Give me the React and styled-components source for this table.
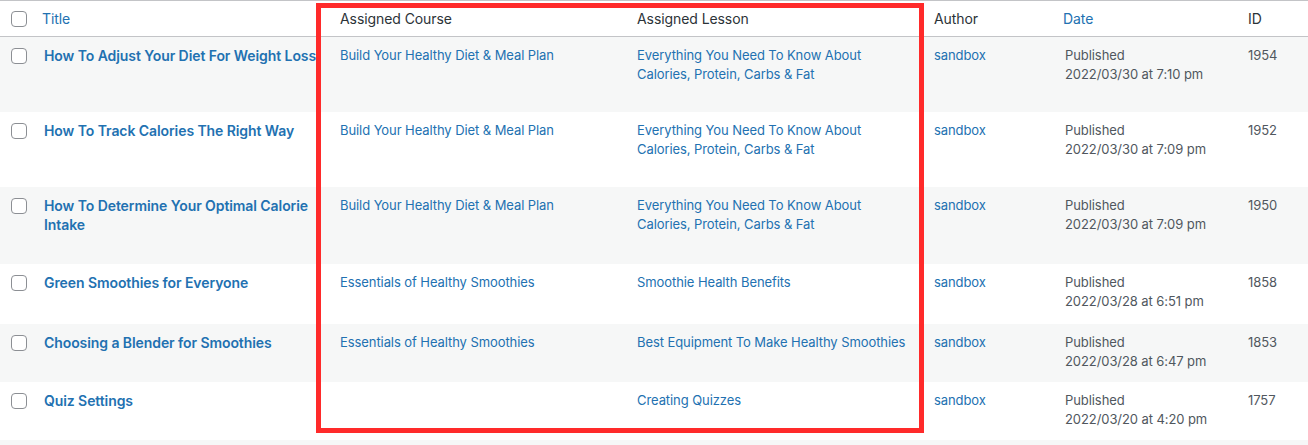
import React from 'react';
import styled, { createGlobalStyle } from 'styled-components';

const GlobalStyle = createGlobalStyle`
  html, body {
    margin: 0;
    padding: 0;
    background: #f6f7f7;
  }
  body {
    font-family: Inter, "Noto Sans", sans-serif;
    font-size: 13px;
    letter-spacing: -0.08px;
    color: #3c434a;
    -webkit-font-smoothing: antialiased;
  }
`;

const COLS = '34px 296px 297px 297px 131px 183px 1fr';

const Page = styled.div`
  position: relative;
`;

const Table = styled.div`
  background: #fff;
  border-top: 1px solid #c3c4c7;
`;

const HeadRow = styled.div`
  display: grid;
  grid-template-columns: ${COLS};
  height: 36px;
  box-sizing: border-box;
  border-bottom: 1px solid #c3c4c7;
  background: #fff;
`;

const HeadCell = styled.div`
  padding: 9px ${(p) => (p.$sortable ? '8px' : '10px')} 8px;
  font-size: 14px;
  line-height: 18px;
  color: ${(p) => (p.$sortable ? '#2271b1' : '#2c3338')};
`;

const CheckCell = styled.div`
  padding: ${(p) => (p.$head ? '10px' : '11px')} 0 0 11px;
`;

const Checkbox = styled.input.attrs({ type: 'checkbox' })`
  appearance: none;
  -webkit-appearance: none;
  display: block;
  width: 16px;
  height: 16px;
  margin: 0;
  box-sizing: border-box;
  border: 1px solid #8c8f94;
  border-radius: 4px;
  background: #fff;
`;

const Row = styled.div`
  display: grid;
  grid-template-columns: ${COLS};
  align-items: start;
  min-height: ${(p) => p.$h}px;
  background: ${(p) => (p.$striped ? '#f6f7f7' : '#fff')};
`;

const Cell = styled.div`
  padding: 9px 10px 8px;
  line-height: 19px;
  font-size: 13px;
  color: #50575e;
`;

const RowTitle = styled.a`
  display: block;
  font-size: 14px;
  font-weight: 600;
  line-height: 19px;
  color: #2271b1;
  text-decoration: none;
  white-space: nowrap;
`;

const Link = styled.a`
  color: #2271b1;
  text-decoration: none;
`;

const Highlight = styled.div`
  position: absolute;
  left: 316px;
  top: 3px;
  width: 608px;
  height: 430px;
  box-sizing: border-box;
  border: 5px solid #ff2a2a;
  pointer-events: none;
`;

const COURSE_DIET = 'Build Your Healthy Diet & Meal Plan';
const COURSE_SMOOTHIE = 'Essentials of Healthy Smoothies';
const LESSON_MACROS = ['Everything You Need To Know About', 'Calories, Protein, Carbs & Fat'];

const rows = [
  { title: ['How To Adjust Your Diet For Weight Loss'], course: COURSE_DIET, lesson: LESSON_MACROS, date: '2022/03/30 at 7:10 pm', id: 1954, h: 75 },
  { title: ['How To Track Calories The Right Way'], course: COURSE_DIET, lesson: LESSON_MACROS, date: '2022/03/30 at 7:09 pm', id: 1952, h: 75 },
  { title: ['How To Determine Your Optimal Calorie', 'Intake'], course: COURSE_DIET, lesson: LESSON_MACROS, date: '2022/03/30 at 7:09 pm', id: 1950, h: 77 },
  { title: ['Green Smoothies for Everyone'], course: COURSE_SMOOTHIE, lesson: ['Smoothie Health Benefits'], date: '2022/03/28 at 6:51 pm', id: 1858, h: 60 },
  { title: ['Choosing a Blender for Smoothies'], course: COURSE_SMOOTHIE, lesson: ['Best Equipment To Make Healthy Smoothies'], date: '2022/03/28 at 6:47 pm', id: 1853, h: 58 },
  { title: ['Quiz Settings'], course: '', lesson: ['Creating Quizzes'], date: '2022/03/20 at 4:20 pm', id: 1757, h: 58 },
];

const Lines = ({ lines }) =>
  lines.map((line, i) => (
    <React.Fragment key={i}>
      {i > 0 && <br />}
      {line}
    </React.Fragment>
  ));

export default function App() {
  return (
    <Page>
      <GlobalStyle />
      <Table>
        <HeadRow>
          <CheckCell $head>
            <Checkbox />
          </CheckCell>
          <HeadCell $sortable>Title</HeadCell>
          <HeadCell>Assigned Course</HeadCell>
          <HeadCell>Assigned Lesson</HeadCell>
          <HeadCell>Author</HeadCell>
          <HeadCell $sortable>Date</HeadCell>
          <HeadCell>ID</HeadCell>
        </HeadRow>
        {rows.map((r, i) => (
          <Row key={r.id} $striped={i % 2 === 0} $h={r.h}>
            <CheckCell>
              <Checkbox />
            </CheckCell>
            <Cell>
              <RowTitle href="#">
                <Lines lines={r.title} />
              </RowTitle>
            </Cell>
            <Cell>{r.course && <Link href="#">{r.course}</Link>}</Cell>
            <Cell>
              <Link href="#">
                <Lines lines={r.lesson} />
              </Link>
            </Cell>
            <Cell>
              <Link href="#">sandbox</Link>
            </Cell>
            <Cell>
              Published
              <br />
              {r.date}
            </Cell>
            <Cell>{r.id}</Cell>
          </Row>
        ))}
      </Table>
      <Highlight />
    </Page>
  );
}
